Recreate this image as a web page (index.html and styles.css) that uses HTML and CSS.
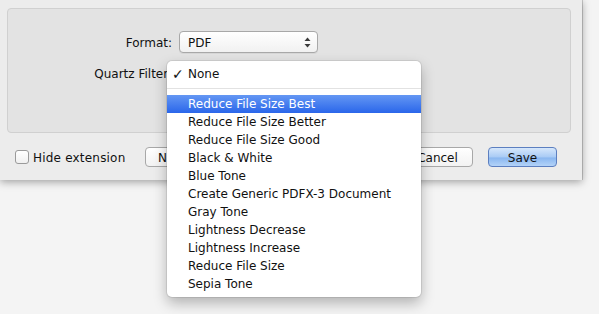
FILE: index.html
```html
<!DOCTYPE html>
<html>
<head>
<meta charset="utf-8">
<link rel="stylesheet" href="styles.css">
</head>
<body>
<div class="dialog">
  <div class="group">
    <div class="form">
      <div class="label">Format:</div>
      <div class="popup">
        <span class="popup-text">PDF</span>
        <svg class="arrows" width="7" height="11" viewBox="0 0 7 11"><path d="M3.5 0.5 L6.5 4 L0.5 4 Z" fill="#3a3a3a"/><path d="M3.5 10.5 L6.5 7 L0.5 7 Z" fill="#3a3a3a"/></svg>
      </div>
      <div class="label">Quartz Filter:</div>
      <div class="popup">
        <span class="popup-text">None</span>
      </div>
    </div>
  </div>
  <div class="bottom">
    <label class="check"><span class="box"></span><span>Hide extension</span></label>
    <button class="btn folder">New Folder</button>
    <div class="spacer"></div>
    <button class="btn cancel">Cancel</button>
    <button class="btn save">Save</button>
  </div>
</div>

<div class="menu">
  <div class="item"><span class="tick">✓</span>None</div>
  <div class="sep"></div>
  <div class="item selected">Reduce File Size Best</div>
  <div class="item">Reduce File Size Better</div>
  <div class="item">Reduce File Size Good</div>
  <div class="item">Black &amp; White</div>
  <div class="item">Blue Tone</div>
  <div class="item">Create Generic PDFX-3 Document</div>
  <div class="item">Gray Tone</div>
  <div class="item">Lightness Decrease</div>
  <div class="item">Lightness Increase</div>
  <div class="item">Reduce File Size</div>
  <div class="item">Sepia Tone</div>
</div>
</body>
</html>
```

FILE: styles.css
```css
html, body {
  margin: 0;
  padding: 0;
}
body {
  width: 599px;
  height: 314px;
  overflow: hidden;
  background: #f4f4f4;
  font-family: "DejaVu Sans", "Liberation Sans", sans-serif;
  font-size: 12px;
  color: #111;
  position: relative;
}
.dialog {
  width: 582px;
  height: 180px;
  background: #ececec;
  box-shadow: 0 2px 8px rgba(0,0,0,0.35), 1px 0 0 #c9c9c9;
  box-sizing: border-box;
  padding-top: 8px;
  display: flex;
  flex-direction: column;
}
.group {
  margin: 0 11px 0 7px;
  height: 125px;
  box-sizing: border-box;
  background: #e3e3e3;
  border: 1px solid #d0d0d0;
  border-radius: 4px;
  padding-top: 22px;
}
.form {
  display: grid;
  grid-template-columns: 164px 139px;
  column-gap: 7px;
  row-gap: 9px;
  align-items: center;
}
.label {
  text-align: right;
  padding-top: 1px;
}
.popup {
  height: 22px;
  box-sizing: border-box;
  border: 1px solid #a8a8a8;
  border-radius: 4px;
  background: linear-gradient(#ffffff, #f1f1f1);
  box-shadow: 0 1px 0 rgba(0,0,0,0.05);
  display: flex;
  align-items: center;
  padding-left: 8px;
  padding-right: 6px;
  padding-top: 1px;
}
.popup-text {
  flex: 1;
}
.arrows {
  display: block;
}
.bottom {
  display: flex;
  align-items: center;
  margin-top: 14px;
  padding: 0 25px 0 15px;
  height: 20px;
}
.check {
  display: flex;
  align-items: center;
  gap: 4px;
}
.check span:last-child {
  padding-top: 1px;
  letter-spacing: 0.2px;
}
.box {
  width: 14px;
  height: 14px;
  box-sizing: border-box;
  border: 1px solid #9a9a9a;
  border-radius: 3px;
  background: linear-gradient(#ffffff, #f0f0f0);
}
.btn {
  font: inherit;
  color: #111;
  height: 20px;
  box-sizing: border-box;
  border: 1px solid #a8a8a8;
  border-radius: 4px;
  background: linear-gradient(#ffffff, #f2f2f2);
  padding: 1px 0 0 0;
}
.folder {
  margin-left: 20px;
  width: 92px;
}
.spacer {
  flex: 1;
}
.cancel {
  width: 71px;
}
.save {
  width: 69px;
  margin-left: 15px;
  border-color: #5c7fc0;
  background: linear-gradient(#d6e7fb 0%, #a9cbf5 50%, #8ab7f0 55%, #b3d3f8 100%);
}
.menu {
  position: absolute;
  left: 167px;
  top: 61px;
  width: 254px;
  height: 236px;
  box-sizing: border-box;
  background: #ffffff;
  border-radius: 5px;
  box-shadow: 0 0 0 1px rgba(0,0,0,0.08), 0 6px 14px rgba(0,0,0,0.28);
  padding-top: 4px;
}
.item {
  height: 18px;
  line-height: 18px;
  padding-left: 21px;
  position: relative;
  color: #111;
}
.tick {
  position: absolute;
  left: 5px;
  top: 0;
  font-size: 14px;
}
.sep {
  height: 12px;
  position: relative;
}
.sep::after {
  content: "";
  position: absolute;
  left: 0;
  right: 0;
  top: 5px;
  height: 1px;
  background: #e2e2e2;
}
.selected {
  color: #ffffff;
  background: linear-gradient(#6497f3, #2a66ea);
}
```
